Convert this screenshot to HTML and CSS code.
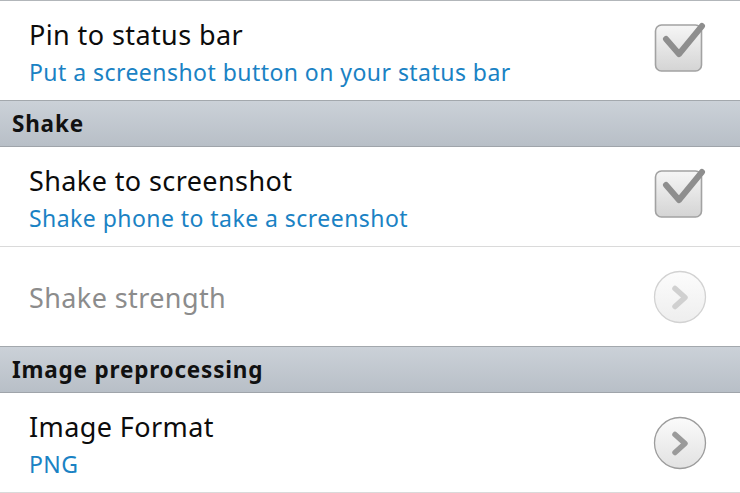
FILE: index.html
```html
<!DOCTYPE html>
<html>
<head>
<meta charset="utf-8">
<link rel="stylesheet" href="styles.css">
</head>
<body>
<div class="list">
  <div class="row">
    <div class="texts">
      <div class="title">Pin to status bar</div>
      <div class="summary">Put a screenshot button on your status bar</div>
    </div>
    <svg class="widget" width="60" height="60" viewBox="0 0 60 60">
      <defs>
        <linearGradient id="cb1" x1="0" y1="0" x2="0" y2="1">
          <stop offset="0" stop-color="#f6f6f6"/>
          <stop offset="1" stop-color="#d4d4d4"/>
        </linearGradient>
      </defs>
      <rect x="5.5" y="4" width="46" height="46" rx="6" fill="url(#cb1)" stroke="#a2a2a2" stroke-width="1.6"/>
      <polyline points="16,18 29,33 52,5" fill="none" stroke="#8e8e8e" stroke-width="6" stroke-linecap="round" stroke-linejoin="round"/>
    </svg>
  </div>
  <div class="header">Shake</div>
  <div class="row divided">
    <div class="texts">
      <div class="title">Shake to screenshot</div>
      <div class="summary">Shake phone to take a screenshot</div>
    </div>
    <svg class="widget" width="60" height="60" viewBox="0 0 60 60">
      <defs>
        <linearGradient id="cb2" x1="0" y1="0" x2="0" y2="1">
          <stop offset="0" stop-color="#f6f6f6"/>
          <stop offset="1" stop-color="#d4d4d4"/>
        </linearGradient>
      </defs>
      <rect x="5.5" y="4" width="46" height="46" rx="6" fill="url(#cb2)" stroke="#a2a2a2" stroke-width="1.6"/>
      <polyline points="16,18 29,33 52,5" fill="none" stroke="#8e8e8e" stroke-width="6" stroke-linecap="round" stroke-linejoin="round"/>
    </svg>
  </div>
  <div class="row">
    <div class="texts single">
      <div class="title disabled">Shake strength</div>
    </div>
    <svg class="widget" width="60" height="60" viewBox="0 0 60 60">
      <defs>
        <linearGradient id="ar1" x1="0" y1="0" x2="0" y2="1">
          <stop offset="0" stop-color="#fcfcfc"/>
          <stop offset="1" stop-color="#eeeeee"/>
        </linearGradient>
      </defs>
      <circle cx="30" cy="30" r="25.5" fill="url(#ar1)" stroke="#d2d2d2" stroke-width="1.3"/>
      <polyline points="25,21.5 35,30.5 25,39.5" fill="none" stroke="#d0d0d0" stroke-width="5.5" stroke-linecap="round" stroke-linejoin="round"/>
    </svg>
  </div>
  <div class="header">Image preprocessing</div>
  <div class="row divided">
    <div class="texts">
      <div class="title">Image Format</div>
      <div class="summary">PNG</div>
    </div>
    <svg class="widget" width="60" height="60" viewBox="0 0 60 60">
      <defs>
        <linearGradient id="ar2" x1="0" y1="0" x2="0" y2="1">
          <stop offset="0" stop-color="#fbfbfb"/>
          <stop offset="1" stop-color="#e2e2e2"/>
        </linearGradient>
      </defs>
      <circle cx="30" cy="30" r="25.5" fill="url(#ar2)" stroke="#9c9c9c" stroke-width="1.3"/>
      <polyline points="25,21.5 35,30.5 25,39.5" fill="none" stroke="#9a9a9a" stroke-width="5.5" stroke-linecap="round" stroke-linejoin="round"/>
    </svg>
  </div>
</div>
</body>
</html>
```

FILE: styles.css
```css
html, body {
  margin: 0;
  padding: 0;
  background: #ffffff;
}
body {
  width: 740px;
  height: 493px;
  overflow: hidden;
  font-family: "Noto Sans", "Open Sans", "DejaVu Sans", sans-serif;
}
.list {
  border-top: 1px solid #b2b6ba;
}
.row {
  height: 99px;
  box-sizing: border-box;
  display: flex;
  align-items: center;
  padding: 0 30px 0 29px;
}
.row.divided {
  height: 100px;
  border-bottom: 1px solid #dadada;
}
.texts {
  flex: 1;
  align-self: flex-start;
  padding-top: 17px;
  display: flex;
  flex-direction: column;
}
.texts.single {
  align-self: center;
  padding-top: 3px;
}
.title {
  font-size: 27px;
  line-height: 34px;
  letter-spacing: 0.4px;
  color: #0c0c0c;
}
.title.disabled {
  color: #8c8c8c;
}
.summary {
  font-size: 23px;
  line-height: 30px;
  letter-spacing: 0.45px;
  margin-top: 4.5px;
  color: #1a82c4;
}
.widget {
  flex: none;
  display: block;
}
.header {
  height: 47px;
  box-sizing: border-box;
  border-top: 1px solid #a3a8ad;
  border-bottom: 1px solid #9fa4aa;
  background: linear-gradient(#cbd1d8, #b8bfc7);
  padding-left: 12px;
  font-size: 22.5px;
  font-weight: bold;
  letter-spacing: 0.8px;
  line-height: 45px;
  color: #111111;
}
```
